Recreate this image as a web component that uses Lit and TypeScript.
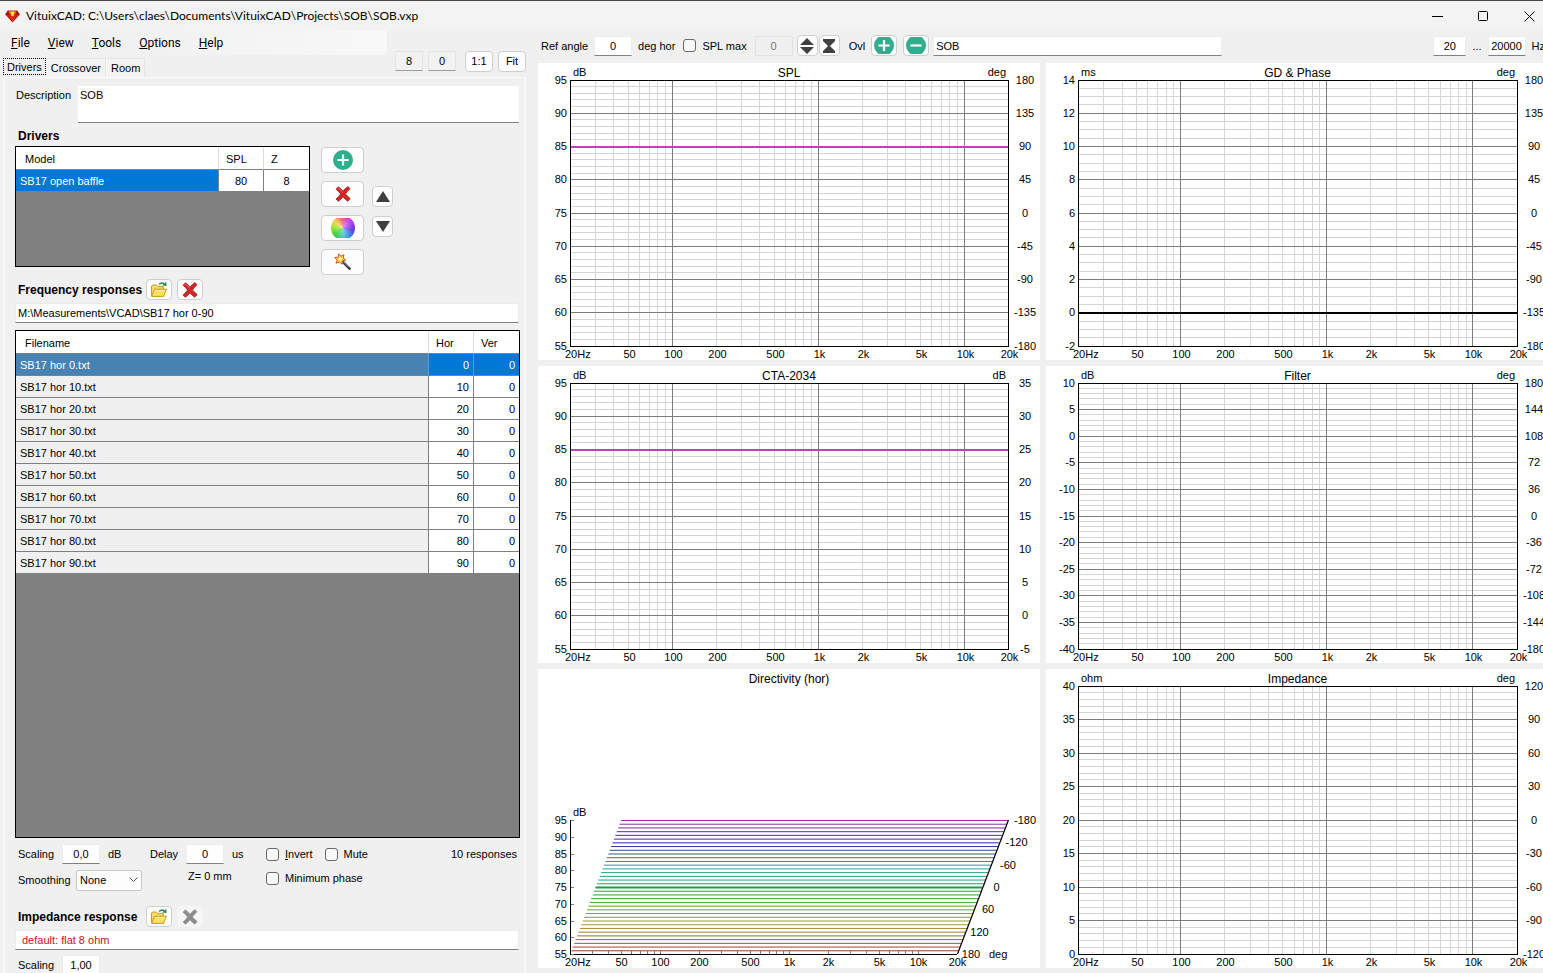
import { LitElement, html, svg, css, nothing } from "lit";
import { customElement, property, state } from "lit/decorators.js";
import { classMap } from "lit/directives/class-map.js";

const UI_FONT = css`"Liberation Sans", Arial, sans-serif`;
const MENU_FONT = css`Roboto, "Open Sans", sans-serif`;
const TITLE_FONT = css`Lato, "Open Sans", sans-serif`;
const HUE_MAX = 300;

const plusIcon = html`<svg width="20" height="20" viewBox="0 0 20 20" aria-hidden="true">
  <circle cx="10" cy="10" r="10" fill="#2fae8e" />
  <path d="M10 4.4V15.6M4.4 10H15.6" stroke="#fff" stroke-width="2.2" />
</svg>`;
const overlayIcon = (add: boolean) => html`<svg width="20" height="17" viewBox="0 1.5 20 17" aria-hidden="true">
  <circle cx="10" cy="10" r="10" fill="#2fae8e" />
  <path d=${add ? "M10 4.4V15.6M4.4 10H15.6" : "M4.4 10H15.6"} stroke="#fff" stroke-width="2.2" />
</svg>`;
const crossIcon = (muted = false) => html`<svg width="18" height="18" viewBox="0 0 18 18" aria-hidden="true">
  <path d="M2 4.2 4.4 1.8Q7 3.6 9 6.2 11.2 3.4 14 1.6L16 3.8Q13.4 6 11.4 9 13.8 11.4 16.2 13.6L13.8 16.2Q11 14.4 9 11.8 7 14.6 4.4 16.2L2 14Q4.8 11.8 6.6 9 4.6 6.2 2 4.2Z"
    fill=${muted ? "#8a8a8a" : "#d32626"} stroke=${muted ? "#9a9a9a" : "#9f1a1a"} stroke-width="0.8" />
  <path d="M3.6 4.2 4.6 3.2 8.8 7.2" fill="none" stroke=${muted ? "#a4a4a4" : "#f06a60"} stroke-width="1" />
</svg>`;
const folderIcon = html`<svg width="18" height="17" viewBox="0 0 18 17" aria-hidden="true">
  <path d="M1.5 14.5V5.2L2.6 4H6.4L7.6 5.4H13.2V8" fill="#f7dc6a" stroke="#c99a1c" />
  <path d="M1.6 15.4 4.4 8.2H16.4L13.6 15.4Z" fill="#fbdf66" stroke="#c99a1c" stroke-linejoin="round" />
  <path d="M5.2 9.6H14.4" stroke="#fff3b4" />
  <path d="M9.2 3.6Q11.4 0.8 14.2 2.8" fill="none" stroke="#2b8a4a" stroke-width="1.6" />
  <path d="M12.2 4.4 16.6 5 16.2 0.8Z" fill="#2b8a4a" />
</svg>`;
const wandIcon = html`<svg width="18" height="18" viewBox="0 0 18 18" aria-hidden="true">
  <path d="M8 8 15.6 15.6" stroke="#3a3440" stroke-width="2.6" stroke-linecap="round" />
  <path d="M9 8.4 15 14.4" stroke="#b0a8b8" stroke-width="0.9" />
  <path d="M4.8 0.8 6.8 3.2 10 1.8 9.2 5 11.8 7 8.6 7.8 8 11.2 5.4 9 2 10.2 3.2 7 0.8 4.6 4.2 4.2Z" fill="#ffd84a" stroke="#c4471f" stroke-width="0.9" />
  <circle cx="6.2" cy="6" r="1.4" fill="#fff6c4" />
</svg>`;
const gemIcon = html`<svg width="15" height="13" viewBox="0 0 15 13" aria-hidden="true">
  <path d="M3 0.6H12L14.8 4.4 7.5 12.6 0.2 4.4Z" fill="#c4200c" />
  <path d="M3 0.6 4.6 4.4H0.2ZM12 0.6 10.4 4.4H14.8Z" fill="#a01808" />
  <path d="M4.6 4.4H10.4L7.5 12.2Z" fill="#d8301a" />
  <path d="M3.6 1H11.4L10.2 4.2H4.8Z" fill="#e8601c" />
  <path d="M5.4 1.8H9.6L8.4 6H6.6Z" fill="#ffe04a" />
</svg>`;

const FREQ_LABELS: [number, string][] = [
  [50, "50"], [100, "100"], [200, "200"], [500, "500"], [1000, "1k"],
  [2000, "2k"], [5000, "5k"], [10000, "10k"], [20000, "20k"],
];
const FREQ_LINES: number[] = [];
for (const decade of [10, 100, 1000, 10000])
  for (let m = 1; m < 10; m++) if (decade * m > 20 && decade * m < 20000) FREQ_LINES.push(decade * m);
const freqPos = (f: number) => Math.log10(f / 20) / 3;

abstract class SizedPlot extends LitElement {
  @state() protected w = 0;
  @state() protected h = 0;
  private observer = new ResizeObserver(([entry]) => {
    this.w = Math.round(entry.contentRect.width);
    this.h = Math.round(entry.contentRect.height);
    this.performUpdate();
  });
  connectedCallback() {
    super.connectedCallback();
    this.observer.observe(this);
  }
  disconnectedCallback() {
    super.disconnectedCallback();
    this.observer.disconnect();
  }
  static styles = css`
    :host { display: block; min-width: 0; min-height: 0; overflow: hidden; background: #fff; }
    svg { display: block; }
    text { font: 11px ${UI_FONT}; fill: #000; }
    .title { font-size: 12px; text-anchor: middle; }
    .mid { text-anchor: middle; }
    .end { text-anchor: end; }
    .frame { fill: none; stroke: #000; shape-rendering: crispEdges; }
    .minor { stroke: #d4d4d4; shape-rendering: crispEdges; }
    .major { stroke: #7c7c7c; shape-rendering: crispEdges; }
  `;
}

@customElement("response-chart")
class ResponseChart extends SizedPlot {
  @property() heading = "";
  @property() unit = "";
  @property() rightUnit = "";
  @property({ type: Array }) left: number[] = [];
  @property({ type: Array }) right: number[] = [];
  @property({ type: Number }) divisions = 5;
  @property({ type: Number }) value?: number;
  @property() traceColor = "#c040c0";
  @property({ type: Number }) traceWidth = 2;

  render() {
    const { w, h } = this;
    if (!w || !h) return nothing;
    const x0 = 32, x1 = w - 32, y0 = 17, y1 = h - 14;
    const n = this.left.length - 1;
    const yAt = (i: number) => Math.floor(y0 + ((y1 - y0) * i) / n) + 0.5;
    const xAt = (f: number) => Math.floor(x0 + (x1 - x0) * freqPos(f)) + 0.5;
    const minorRows = Array.from({ length: n * this.divisions }, (_, i) => i).filter((i) => i % this.divisions);
    const isMajor = (f: number) => f === 100 || f === 1000 || f === 10000;
    const top = this.left[0], bottom = this.left[n];
    const traceY = this.value === undefined ? 0 : Math.round(y0 + ((top - this.value) / (top - bottom)) * (y1 - y0));
    return html`<svg width=${w} height=${h} role="img" aria-label=${this.heading}>
      ${minorRows.map((i) => svg`<line class="minor" x1=${x0} x2=${x1} y1=${yAt(i / this.divisions)} y2=${yAt(i / this.divisions)} />`)}
      ${FREQ_LINES.filter((f) => !isMajor(f)).map((f) => svg`<line class="minor" x1=${xAt(f)} x2=${xAt(f)} y1=${y0} y2=${y1} />`)}
      ${this.left.slice(1, -1).map((_, i) => svg`<line class="major" x1=${x0} x2=${x1} y1=${yAt(i + 1)} y2=${yAt(i + 1)} />`)}
      ${FREQ_LINES.filter(isMajor).map((f) => svg`<line class="major" x1=${xAt(f)} x2=${xAt(f)} y1=${y0} y2=${y1} />`)}
      ${this.value === undefined ? nothing : svg`<line x1=${x0} x2=${x1} y1=${traceY} y2=${traceY} stroke=${this.traceColor} stroke-width=${this.traceWidth} />`}
      <rect class="frame" x=${x0 + 0.5} y=${y0 + 0.5} width=${x1 - x0} height=${y1 - y0} />
      <text class="title" x=${(x0 + x1) / 2} y="14">${this.heading}</text>
      <text x=${x0 + 3} y="13">${this.unit}</text>
      <text class="end" x=${x1 - 2} y="13">${this.rightUnit}</text>
      ${this.left.map((v, i) => svg`<text class="end" x=${x0 - 3} y=${yAt(i) + 3.5}>${v}</text>`)}
      ${this.right.map((v, i) => svg`<text class="mid" x=${x1 + 17} y=${yAt(i) + 3.5}>${v}</text>`)}
      <text x=${x0 - 5} y=${y1 + 12}>20Hz</text>
      ${FREQ_LABELS.map(([f, t]) => svg`<text class="mid" x=${xAt(f) + 1} y=${y1 + 12}>${t}</text>`)}
    </svg>`;
  }
}

@customElement("directivity-chart")
class DirectivityChart extends SizedPlot {
  render() {
    const { w, h } = this;
    if (!w || !h) return nothing;
    const x0 = 32, x1 = w - 32, y1 = h - 14;
    const depth = Math.round((h - 31) / 2), y0 = y1 - depth;
    const skew = Math.round((x1 - x0) * 0.117);
    const base = x1 - skew - x0;
    const levels = [95, 90, 85, 80, 75, 70, 65, 60, 55];
    const yLevel = (i: number) => Math.round(y0 + (depth * i) / 8) + 0.5;
    const slices = Array.from({ length: 37 }, (_, i) => i);
    const xAt = (f: number) => Math.floor(x0 + base * freqPos(f)) + 0.5;
    const color = (t: number) => `hsl(${Math.round(HUE_MAX * (1 - t) - 15 * Math.sin(Math.PI * t))} 58% 40%)`;
    return html`<svg width=${w} height=${h} role="img" aria-label="Directivity (hor)">
      ${slices.map((i) => {
        const t = i / 36, y = y0 + depth * t + 0.5, off = skew * (1 - t);
        return svg`<line x1=${x0 + off} x2=${x0 + off + base} y1=${y} y2=${y} stroke=${i === 18 ? "#1d9f45" : color(t)} stroke-width=${i === 18 ? 2 : 1} />`;
      })}
      <path d=${`M${x1 + 0.5} ${y0}L${x0 + base + 0.5} ${y1}`} stroke="#000" stroke-width="1.2" />
      <path class="frame" d=${`M${x0 + 0.5} ${y0}V${y1 + 0.5}H${x0 + base}`} />
      ${levels.map((_, i) => svg`<line class="major" x1=${x0 + 1} x2=${x0 + 4} y1=${yLevel(i)} y2=${yLevel(i)} />`)}
      ${FREQ_LINES.map((f) => svg`<line class="major" x1=${xAt(f)} x2=${xAt(f)} y1=${y1 - 3} y2=${y1} />`)}
      <text class="title" x=${(x0 + x1) / 2} y="14">Directivity (hor)</text>
      <text x=${x0 + 3} y=${y0 - 4}>dB</text>
      ${levels.map((v, i) => svg`<text class="end" x=${x0 - 3} y=${yLevel(i) + 3.5}>${v}</text>`)}
      ${[-180, -120, -60, 0, 60, 120, 180].map((v, i) => svg`<text class="mid" x=${x1 - (skew * i) / 6 + (v < 0 ? 17 : 14)} y=${Math.round(y0 + (depth * i) / 6) + 4}>${v}</text>`)}
      <text x=${x0 + base + 32} y=${y1 + 4}>deg</text>
      <text x=${x0 - 5} y=${y1 + 12}>20Hz</text>
      ${FREQ_LABELS.map(([f, t]) => svg`<text class="mid" x=${xAt(f)} y=${y1 + 12}>${t}</text>`)}
    </svg>`;
  }
}

@customElement("app-root")
class AppRoot extends LitElement {
  @state() private tab = "Drivers";
  @state() private selected = 0;
  private files = Array.from({ length: 10 }, (_, i) => ({ name: `SB17 hor ${i * 10}.txt`, hor: i * 10, ver: 0 }));

  static styles = css`
    :host {
      display: flex; flex-direction: column; height: 100vh; overflow: hidden;
      background: #f0f0f0; color: #000; font: 11px/14px ${UI_FONT}; cursor: default;
    }
    * { box-sizing: border-box; }
    button, input, select, textarea { font: inherit; color: inherit; margin: 0; }
    svg { display: block; flex: none; }

    .titlebar {
      display: flex; align-items: center; height: 31px; flex: none; padding-left: 5px;
      background: #f3f3f3; border-top: 1px solid #4a4648; font: 12px/16px ${TITLE_FONT};
    }
    .titlebar h1 { flex: 1; margin: 0 0 0 6px; font: inherit; }
    .winbtn { display: grid; place-items: center; width: 46px; height: 30px; padding: 0; border: 0; background: none; }
    .winbtns { display: flex; margin-right: -9px; }

    .body { display: flex; flex: 1; min-height: 0; }
    .side { display: flex; flex-direction: column; flex: none; width: 538px; }
    .main { display: flex; flex-direction: column; flex: 1; min-width: 0; }

    .menus { display: flex; height: 27px; flex: none; }
    .menubar {
      display: flex; align-items: center; width: 387px; height: 24px; padding-left: 5px;
      background: linear-gradient(90deg, #f0f0f0 100px, #f8f8f8); font: 12px/16px ${MENU_FONT};
    }
    .menubar button { padding: 0 6px; margin-right: 6px; border: 0; background: none; }
    u { text-underline-offset: 1px; }
    .zoombox { display: flex; align-items: center; align-self: flex-start; height: 20px; gap: 5px; margin-top: 20px; margin-left: 8px; }

    .tabs { display: flex; align-items: flex-end; height: 20px; flex: none; padding-left: 3px; margin-right: 12px; border-bottom: 1px solid #fbfbfb; }
    .tab { height: 19px; padding: 0 4px; border: 1px solid #e4e4e4; border-bottom: 0; border-left-color: #f8f8f8; background: #f3f3f3; }
    .tab.on { align-self: flex-start; height: 17px; padding: 0 3px; border: 1px dotted #000; background: #f0f0f0; }

    .panel { display: flex; flex-direction: column; flex: 1; min-height: 0; margin: 0 12px 0 3px; padding: 8px 4px 0 10px; border-left: 2px solid #f8f8f8; border-right: 2px solid #f8f8f8; }
    .row { display: flex; align-items: center; flex: none; }
    .box { height: 20px; padding: 0 2px; border: 1px solid #ececec; border-bottom-color: #808080; border-radius: 0; background: #fff; outline: 0; }
    .num { text-align: center; }
    .flat { background: #f2f2f2; border-color: #e4e4e4 #e4e4e4 #9c9c9c; }
    .dim { color: #7a7a7a; border-color: #e2e2e2; background: #f0f0f0; }
    .w28 { width: 28px; } .w33 { width: 33px; } .w38 { width: 38px; }

    .btn { display: grid; place-items: center; padding: 0; border: 1px solid #cfcfcf; border-radius: 4px; background: #fdfdfd; }
    .btn.text { height: 21px; width: 28px; }
    .btn.big { width: 43px; height: 26px; }
    .btn.small { width: 21px; height: 21px; }
    .btn.mid { width: 26px; height: 21px; }
    .btn:disabled { border-color: #f4f4f4; background: #f6f6f6; }
    .wheel { width: 24px; height: 20px; overflow: hidden; display: grid; align-content: center; justify-content: center; }
    .disc {
      width: 24px; height: 24px; border-radius: 50%;
      background: radial-gradient(circle, #ffffff70, #ffffff00 60%), conic-gradient(#f0508c, #c83cf0 45deg, #5a3cdc 100deg, #3c8ce6 140deg, #46c8c8 180deg, #32d23c 230deg, #a0e632 275deg, #f5d250 310deg, #f0506e);
    }

    .desc { gap: 7px; margin: 0 1px; }
    .row.desc { align-items: flex-start; }
    .desc label { padding-top: 2px; }
    textarea { flex: 1; height: 37px; padding: 2px 2px; resize: none; border: 0; border-bottom: 1px solid #808080; background: #fff; outline: 0; font: inherit; }
    h2 { margin: 0 0 0 3px; font: bold 12px/18px ${UI_FONT}; white-space: nowrap; }
    .driverhead { height: 23px; padding-top: 3px; }

    .driverarea { display: flex; gap: 11px; flex: none; height: 129px; }
    .grid { border: 1px solid #000; background: #808080; overflow: hidden; }
    .drivergrid { width: 295px; height: 121px; }
    .filegrid { flex: 1; min-height: 0; margin-top: 7px; }
    .buttons { display: flex; flex-direction: column; gap: 8px; padding-top: 1px; }
    .movers { display: flex; flex-direction: column; gap: 9px; padding-top: 40px; margin-left: -3px; }
    table { width: 100%; table-layout: fixed; border-collapse: separate; border-spacing: 0; }
    th { height: 23px; padding: 1px 0 0 7px; background: #fff; border-right: 1px solid #dcdcdc; border-bottom: 1px solid #808080; text-align: left; font-weight: normal; }
    th:first-child { padding-left: 9px; }
    td { height: 22px; padding: 0 4px; border-right: 1px solid #808080; border-bottom: 1px solid #808080; background: #fff; text-align: right; }
    th:last-child, td:last-child { border-right: 0; }
    td:first-child { text-align: left; background: #f0f0f0; }
    .drivergrid td:not(:first-child) { text-align: center; }
    .drivergrid td:first-child { background: #0078d7; color: #fff; }
    .on td { background: #0078d7; color: #fff; border-right-color: #5c9ad0; }
    .on td:first-child { background: #4682b4; }
    .c45 { width: 45px; }

    .filehead { height: 21px; margin-top: 4px; }
    .filehead .btn.mid { margin-left: 5px; }
    .filehead h2 { width: 123px; }
    .path { width: calc(100% - 1px); flex: none; margin-top: 3px; }
    .red { padding-left: 6px; color: #d01010; }

    .ctl { height: 20px; margin: 6px 3px 0 3px; }
    .check { display: inline-flex; align-items: center; gap: 6px; margin-right: 12px; }
    .check input { appearance: none; width: 13px; height: 13px; margin: 0; border: 1px solid #6a6a6a; border-radius: 3px; background: #f8f8f8; }
    .c1 { width: 132px; display: flex; align-items: center; }
    .c2 { width: 116px; display: flex; align-items: center; }
    .c1 .lab { width: 44px; } .c2 .lab { width: 36px; }
    .unit { margin-left: 8px; }
    .smooth { width: 58px; }
    .select { display: grid; align-items: center; width: 66px; }
    .select > * { grid-area: 1 / 1; }
    .select svg { justify-self: end; margin-right: 4px; pointer-events: none; }
    select { appearance: none; width: 66px; height: 21px; padding: 0 3px; border: 1px solid #c8c8c8; border-radius: 2px; background: #fdfdfd; }
    .z { width: 124px; padding-left: 46px; margin-top: -8px; }
    .minphase { margin-top: -4px; }
    .count { margin-left: auto; }
    .imp { margin-top: 16px; }
    .last { margin: 5px 3px -2px; }

    .toolbar { display: flex; align-items: center; height: 32px; padding: 0 0 3px 3px; flex: none; white-space: nowrap; }
    .toolbar .check { margin: 0 8px; }
    .ml1 { margin-left: 1px; } .ml4 { margin-left: 4px; } .ml6 { margin-left: 6px; } .ml9 { margin-left: 9px; }
    .ovl { width: 289px; }
    .range { display: flex; align-items: center; margin-left: auto; margin-right: -2px; gap: 6px; }
    .charts {
      display: grid; flex: 1; min-height: 0; gap: 6px; margin-bottom: 5px; width: calc(100% + 6px);
      grid-template-columns: minmax(0, 502fr) minmax(0, 503fr);
      grid-template-rows: minmax(0, 297fr) minmax(0, 297fr) minmax(0, 299fr);
    }
  `;

  render() {
    return html`
      <header class="titlebar">
        ${gemIcon}
        <h1>VituixCAD: C:\\Users\\claes\\Documents\\VituixCAD\\Projects\\SOB\\SOB.vxp</h1>
        <div class="winbtns">
          <button class="winbtn" aria-label="Minimize"><svg width="11" height="11"><path d="M0 5.5H11" stroke="#000" /></svg></button>
          <button class="winbtn" aria-label="Maximize"><svg width="11" height="11"><rect x="0.5" y="0.5" width="9" height="9" rx="1" fill="none" stroke="#000" /></svg></button>
          <button class="winbtn" aria-label="Close"><svg width="11" height="11"><path d="M0.5 0.5 10.5 10.5M10.5 0.5 0.5 10.5" stroke="#000" /></svg></button>
        </div>
      </header>
      <div class="body">
        ${this.renderSide()}
        ${this.renderMain()}
      </div>`;
  }

  private renderSide() {
    return html`<section class="side">
      <div class="menus">
        <nav class="menubar">
          ${["File", "View", "Tools", "Options", "Help"].map((m) => html`<button><u>${m[0]}</u>${m.slice(1)}</button>`)}
        </nav>
        <div class="zoombox">
          <input class="box num flat w28" aria-label="Drivers count" .value=${"8"} />
          <input class="box num flat w28" aria-label="Offset" .value=${"0"} />
          <button class="btn text ml4">1:1</button>
          <button class="btn text">Fit</button>
        </div>
      </div>
      <div class="tabs" role="tablist">
        ${["Drivers", "Crossover", "Room"].map((t) => html`<button role="tab" class=${classMap({ tab: true, on: t === this.tab })}
          aria-selected=${t === this.tab} @click=${() => (this.tab = t)}>${t}</button>`)}
      </div>
      <div class="panel">
        <div class="row desc">
          <label for="desc">Description</label>
          <textarea id="desc" .value=${"SOB"}></textarea>
        </div>
        <div class="row driverhead"><h2>Drivers</h2></div>
        <div class="driverarea">
          <div class="grid drivergrid">
            <table>
              <colgroup><col /><col class="c45" /><col class="c45" /></colgroup>
              <thead><tr><th>Model</th><th>SPL</th><th>Z</th></tr></thead>
              <tbody><tr><td>SB17 open baffle</td><td>80</td><td>8</td></tr></tbody>
            </table>
          </div>
          <div class="buttons">
            <button class="btn big" aria-label="Add driver">${plusIcon}</button>
            <button class="btn big" aria-label="Remove driver">${crossIcon()}</button>
            <button class="btn big" aria-label="Colour"><span class="wheel"><span class="disc"></span></span></button>
            <button class="btn big" aria-label="Wizard">${wandIcon}</button>
          </div>
          <div class="movers">
            <button class="btn small" aria-label="Move up"><svg width="14" height="11"><path d="M7 0 14 11H0Z" fill="#404040" /></svg></button>
            <button class="btn small" aria-label="Move down"><svg width="14" height="11"><path d="M0 0H14L7 11Z" fill="#404040" /></svg></button>
          </div>
        </div>
        <div class="row filehead">
          <h2>Frequency responses</h2>
          <button class="btn mid" aria-label="Open responses">${folderIcon}</button>
          <button class="btn mid" aria-label="Clear responses">${crossIcon()}</button>
        </div>
        <input class="box path" aria-label="Response folder" .value=${"M:\\Measurements\\VCAD\\SB17 hor 0-90"} />
        <div class="grid filegrid">
          <table>
            <colgroup><col /><col class="c45" /><col class="c45" /></colgroup>
            <thead><tr><th>Filename</th><th>Hor</th><th>Ver</th></tr></thead>
            <tbody>
              ${this.files.map((f, i) => html`<tr class=${classMap({ on: i === this.selected })} @click=${() => (this.selected = i)}>
                <td>${f.name}</td><td>${f.hor}</td><td>${f.ver}</td></tr>`)}
            </tbody>
          </table>
        </div>
        <div class="row ctl">
          <div class="c1"><label class="lab" for="scale">Scaling</label><input id="scale" class="box num w38" .value=${"0,0"} /><span class="unit">dB</span></div>
          <div class="c2"><label class="lab" for="delay">Delay</label><input id="delay" class="box num w38" .value=${"0"} /><span class="unit">us</span></div>
          <label class="check"><input type="checkbox" /><span><u>I</u>nvert</span></label>
          <label class="check"><input type="checkbox" />Mute</label>
          <span class="count">10 responses</span>
        </div>
        <div class="row ctl">
          <label class="smooth" for="smooth">Smoothing</label>
          <div class="select">
            <select id="smooth"><option>None</option><option>1/12</option></select>
            <svg width="9" height="6"><path d="M0.5 0.5 4.5 4.5 8.5 0.5" fill="none" stroke="#555" /></svg>
          </div>
          <span class="z">Z= 0 mm</span>
          <label class="check minphase"><input type="checkbox" />Minimum phase</label>
        </div>
        <div class="row filehead imp">
          <h2>Impedance response</h2>
          <button class="btn mid" aria-label="Open impedance">${folderIcon}</button>
          <button class="btn mid" aria-label="Clear impedance" disabled>${crossIcon(true)}</button>
        </div>
        <input class="box path red" aria-label="Impedance file" .value=${"default: flat 8 ohm"} />
        <div class="row ctl last">
          <div class="c1"><label class="lab" for="iscale">Scaling</label><input id="iscale" class="box num w38" .value=${"1,00"} /></div>
        </div>
      </div>
    </section>`;
  }

  private renderMain() {
    const spl = [95, 90, 85, 80, 75, 70, 65, 60, 55];
    const deg = [180, 135, 90, 45, 0, -45, -90, -135, -180];
    return html`<main class="main">
      <div class="toolbar">
        <label for="ref">Ref angle</label>
        <input id="ref" class="box num w38 ml6" .value=${"0"} />
        <span class="ml6">deg hor</span>
        <label class="check"><input type="checkbox" />SPL max</label>
        <input class="box num w38 dim" aria-label="SPL max value" disabled .value=${"0"} />
        <button class="btn small ml4" aria-label="Expand"><svg width="14" height="16"><path d="M7 0 14 7H0ZM7 16 0 9H14Z" fill="#404040" /></svg></button>
        <button class="btn small ml1" aria-label="Collapse"><svg width="14" height="14"><path d="M1 0H13V2L8 7 13 12V14H1V12L6 7 1 2Z" fill="#404040" /></svg></button>
        <label class="ml9" for="ovl">Ovl</label>
        <button class="btn mid ml6" aria-label="Add overlay">${overlayIcon(true)}</button>
        <button class="btn mid ml6" aria-label="Remove overlay">${overlayIcon(false)}</button>
        <input id="ovl" class="box ovl ml4" .value=${"SOB"} />
        <div class="range">
          <input class="box num w33" aria-label="Minimum frequency" .value=${"20"} />
          <span>...</span>
          <input class="box num w38" aria-label="Maximum frequency" .value=${"20000"} />
          <span>Hz</span>
        </div>
      </div>
      <div class="charts">
        <response-chart heading="SPL" unit="dB" rightUnit="deg" .left=${spl} .right=${deg} .value=${85}></response-chart>
        <response-chart heading="GD &amp; Phase" unit="ms" rightUnit="deg" .left=${[14, 12, 10, 8, 6, 4, 2, 0, -2]} .right=${deg} .divisions=${4} .value=${0} traceColor="#000"></response-chart>
        <response-chart heading="CTA-2034" unit="dB" rightUnit="dB" .left=${spl} .right=${[35, 30, 25, 20, 15, 10, 5, 0, -5]} .value=${85}></response-chart>
        <response-chart heading="Filter" unit="dB" rightUnit="deg" .left=${[10, 5, 0, -5, -10, -15, -20, -25, -30, -35, -40]}
          .right=${[180, 144, 108, 72, 36, 0, -36, -72, -108, -144, -180]}></response-chart>
        <directivity-chart></directivity-chart>
        <response-chart heading="Impedance" unit="ohm" rightUnit="deg" .left=${[40, 35, 30, 25, 20, 15, 10, 5, 0]}
          .right=${[120, 90, 60, 30, 0, -30, -60, -90, -120]}></response-chart>
      </div>
    </main>`;
  }
}
